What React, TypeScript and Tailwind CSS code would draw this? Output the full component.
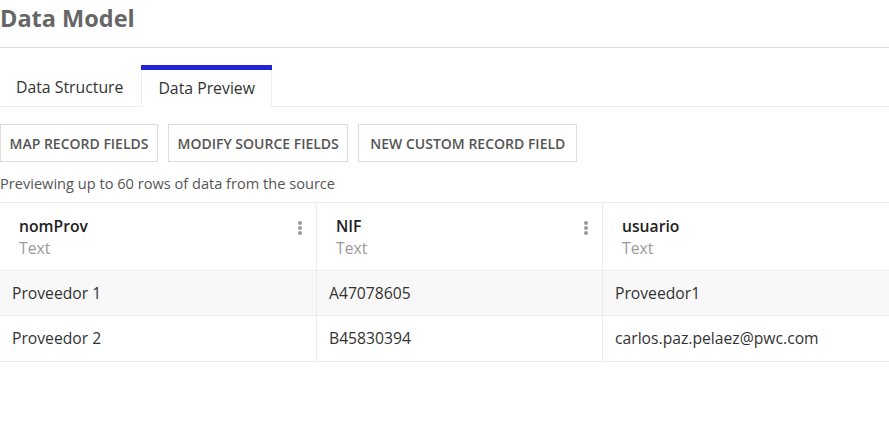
import React from 'react';

type Column = { name: string; type: string; menu: boolean };

const columns: Column[] = [
  { name: 'nomProv', type: 'Text', menu: true },
  { name: 'NIF', type: 'Text', menu: true },
  { name: 'usuario', type: 'Text', menu: false },
];

const rows: string[][] = [
  ['Proveedor 1', 'A47078605', 'Proveedor1'],
  ['Proveedor 2', 'B45830394', 'carlos.paz.pelaez@pwc.com'],
];

const actions = [
  { label: 'MAP RECORD FIELDS', pad: 'px-[8.5px]' },
  { label: 'MODIFY SOURCE FIELDS', pad: 'px-[8.5px]' },
  { label: 'NEW CUSTOM RECORD FIELD', pad: 'px-[11px]' },
];

const Kebab: React.FC = () => (
  <svg width="6" height="16" viewBox="0 0 6 16" className="fill-[#9a9a9a]">
    <circle cx="3" cy="3" r="2" />
    <circle cx="3" cy="8" r="2" />
    <circle cx="3" cy="13" r="2" />
  </svg>
);

const colWidths = ['w-[317px]', 'w-[286px]', 'flex-1'];

export default function App() {
  return (
    <div className="w-[889px] h-[433px] bg-white overflow-hidden font-['Open_Sans',sans-serif]">
      {/* Header */}
      <div className="h-[48px] border-b border-[#dcdcdc]">
        <h1 className="text-[23.5px] leading-[36px] font-bold text-[#666]">Data Model</h1>
      </div>

      {/* Tabs */}
      <div className="mt-[17px] flex items-end border-b border-[#ececec] h-[42px]">
        <div className="px-4 h-[37px] flex items-center text-[15.8px] text-[#333]">Data Structure</div>
        <div className="ml-[2px] h-[42px] flex flex-col border-x border-[#ececec] -mb-px bg-white">
          <div className="h-[5px] bg-[#2323d8] -mx-px" />
          <div className="flex-1 flex items-center pt-[1px] px-[16px] text-[15.8px] text-[#333]">Data Preview</div>
        </div>
      </div>

      {/* Actions */}
      <div className="mt-[17px] flex gap-[10px]">
        {actions.map((a) => (
          <button
            key={a.label}
            className={`h-[38px] ${a.pad} border border-[#dcdcdc] text-[14px] font-semibold text-[#555]`}
          >
            {a.label}
          </button>
        ))}
      </div>

      <p className="mt-[11px] text-[14.6px] leading-[20px] text-[#555]">Previewing up to 60 rows of data from the source</p>

      {/* Table */}
      <div className="mt-[9px] border-t border-[#ececec]">
        <div className="flex h-[68px] border-b border-[#ececec]">
          {columns.map((c, i) => (
            <div
              key={c.name}
              className={`${colWidths[i]} ${i < 2 ? 'border-r border-[#ececec]' : ''} flex justify-between pl-[19px] pr-[13px] pt-[12px]`}
            >
              <div className="flex flex-col">
                <span className="text-[15.7px] leading-[22px] font-semibold text-[#222]">{c.name}</span>
                <span className="text-[15.7px] leading-[22px] text-[#9a9a9a]">{c.type}</span>
              </div>
              {c.menu && (
                <div className="pt-[5px]">
                  <Kebab />
                </div>
              )}
            </div>
          ))}
        </div>
        {rows.map((r, ri) => (
          <div
            key={ri}
            className={`flex border-b border-[#ececec] ${ri === 0 ? 'h-[45px] bg-[#f8f8f8]' : 'h-[46px] bg-white'}`}
          >
            {r.map((cell, ci) => (
              <div
                key={ci}
                className={`${colWidths[ci]} ${ci < 2 ? 'border-r border-[#ececec]' : ''} flex items-center pl-[12px] pt-[1px] text-[15.7px] text-[#333]`}
              >
                {cell}
              </div>
            ))}
          </div>
        ))}
      </div>
    </div>
  );
}
